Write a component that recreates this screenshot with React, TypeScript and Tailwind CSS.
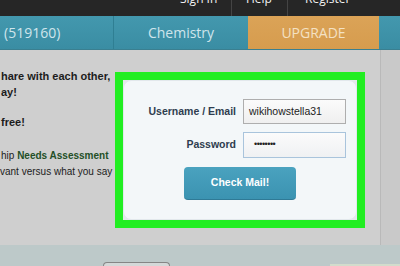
import React from 'react';

export default function App() {
  return (
    <div className="w-[400px] h-[266px] overflow-hidden bg-[#cfcfcf] font-['Liberation_Sans',Arial,sans-serif]">
      {/* top account bar, mostly cropped */}
      <div className="h-[16px] bg-[#262626] flex overflow-hidden pl-[180px] font-['Open_Sans',sans-serif] text-[12px] leading-[12px] text-[#f2f2f2]">
        <div className="w-[52px] border-r border-[#444]">
          <div className="-mt-[7px]">Sign In</div>
        </div>
        <div className="w-[56px] pl-[14px] border-r border-[#444]">
          <div className="-mt-[7px]">Help</div>
        </div>
        <div className="pl-[17px]">
          <div className="-mt-[7px]">Register</div>
        </div>
      </div>

      {/* nav */}
      <div className="h-[34px] flex bg-gradient-to-b from-[#4398ae] to-[#3a8da3] font-['Open_Sans',sans-serif] text-[14px] text-[#cfe5ec] border-b border-[#3a7f90]">
        <div className="w-[114px] pl-[4px] flex items-center border-r border-[#2f7f93]">(519160)</div>
        <div className="w-[134px] flex items-center justify-center">Chemistry</div>
        <div className="w-[131px] flex items-center justify-center bg-gradient-to-b from-[#dba357] to-[#d69c4e] text-[#f4e1c3]">
          UPGRADE
        </div>
        <div className="flex-1" />
      </div>

      {/* main */}
      <div className="h-[195px] flex">
        <div className="w-[115px] overflow-hidden pt-[18px] text-[#1c1c1c]">
          <div className="font-bold text-[11px] leading-[16px] whitespace-nowrap">
            <div className="pl-[1px]">hare with each other,</div>
            <div className="pl-[1px]">ay!</div>
          </div>
          <div className="mt-[14px] font-bold text-[11px] leading-[16px] pl-[1px]">free!</div>
          <div className="mt-[18px] text-[10px] leading-[16px] whitespace-nowrap">
            <div className="pl-[1px]">
              hip <span className="font-bold text-[#234f27]">Needs Assessment</span>
            </div>
            <div>vant versus what you say</div>
          </div>
        </div>

        <div className="w-[250px] h-[156px] mt-[22px] border-[8px] border-[#22ee22] bg-[#e4e8ea]">
          <div className="h-full rounded-[8px] bg-[#f3f7f9] border border-[#e2e8ec] pt-[18px] text-[#2e3d4f]">
            <div className="flex items-center">
              <div className="w-[112px] text-right font-bold text-[10.5px]">Username / Email</div>
              <div className="ml-[7px] w-[103px] h-[25px] border border-[#aeaeae] bg-gradient-to-b from-[#fbfbfb] to-[#efefef] flex items-center pl-[5px] text-[10.5px] text-[#222]">
                wikihowstella31
              </div>
            </div>
            <div className="flex items-center mt-[8px]">
              <div className="w-[112px] text-right font-bold text-[10.5px]">Password</div>
              <div className="ml-[7px] w-[103px] h-[26px] border border-[#a9c4dc] bg-gradient-to-b from-[#fbfbfb] to-[#eff1f3] flex items-center pl-[10px] text-[9px] tracking-[-0.5px] text-[#222]">
                ••••••••
              </div>
            </div>
            <div className="ml-[60px] mt-[9px] w-[112px] h-[33px] rounded-[4px] bg-gradient-to-b from-[#4aa2bf] to-[#3b93b1] border-b border-[#2f7a96] flex items-center justify-center text-white font-bold text-[10.5px]">
              Check Mail!
            </div>
          </div>
        </div>

        <div className="w-[15px]" />
        <div className="flex-1 border-l border-[#b9b9b9] bg-[#c9c9c9]" />
      </div>

      {/* bottom band */}
      <div className="h-[21px] bg-[#bdc9c9] flex items-end">
        <div className="ml-[103px] w-[67px] h-[4px] rounded-t-[6px] border border-b-0 border-[#858585] bg-[#d4d8d8]" />
        <div className="ml-auto w-[70px] h-[2px] bg-[#d2dccc]" />
      </div>
    </div>
  );
}
